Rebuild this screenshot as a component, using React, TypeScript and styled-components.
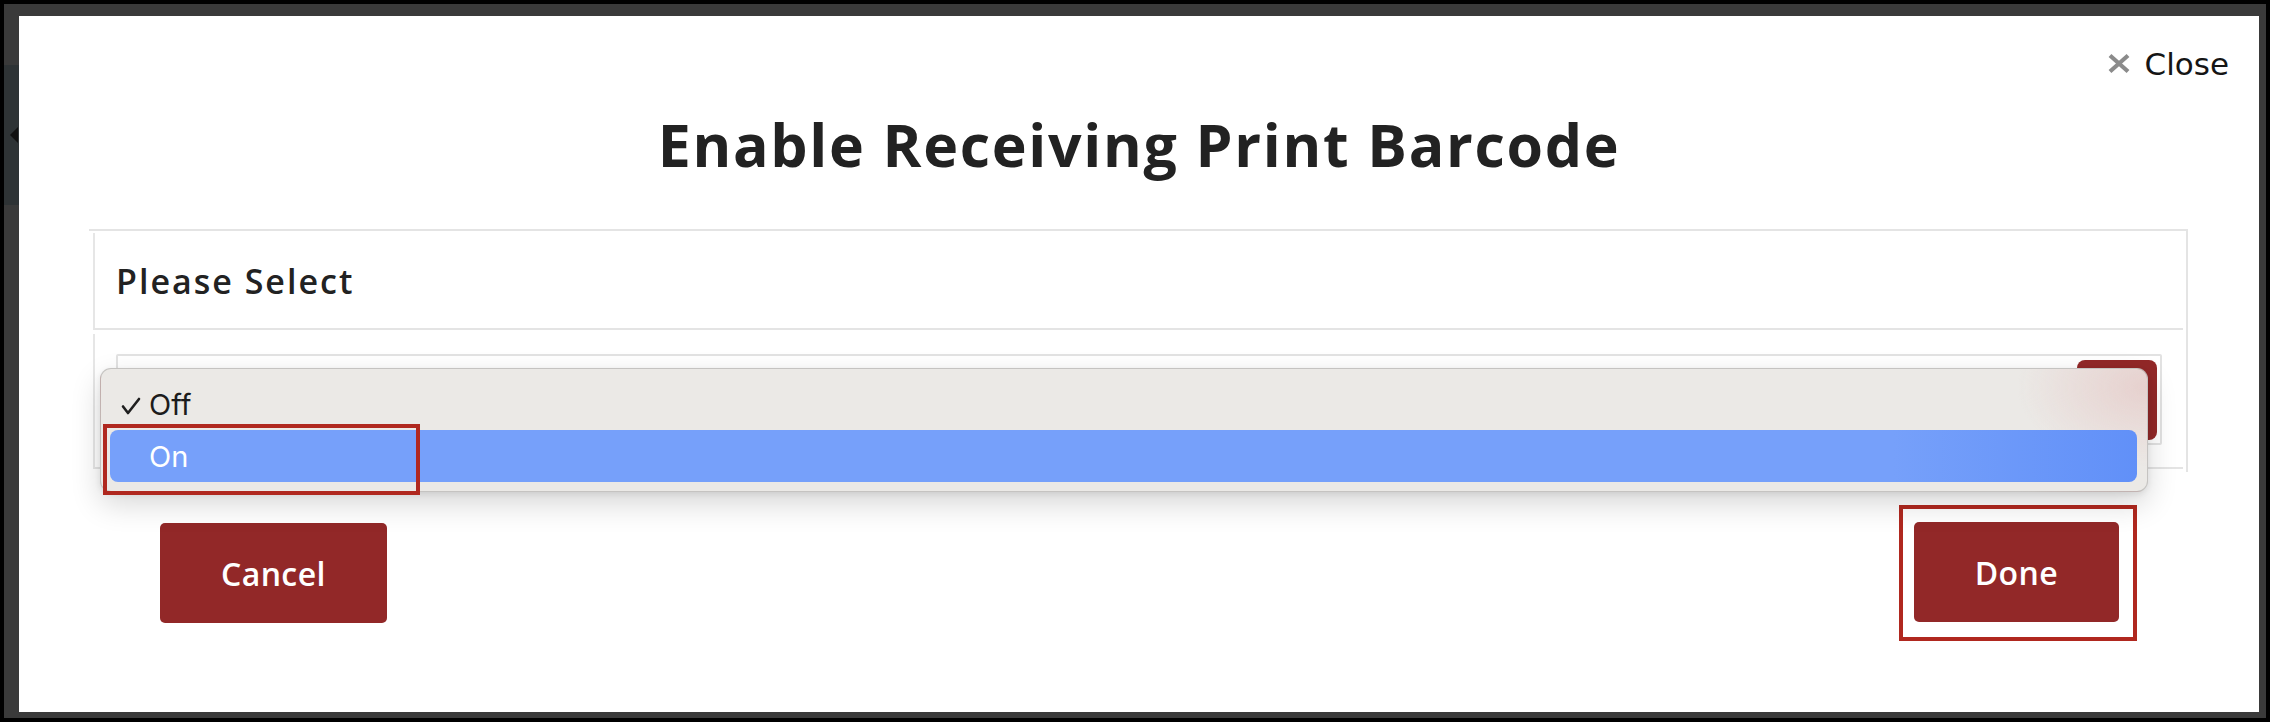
import styled, { createGlobalStyle } from 'styled-components';

const GlobalStyle = createGlobalStyle`
  * {
    box-sizing: border-box;
  }
  html,
  body {
    margin: 0;
    padding: 0;
    background: #000;
    font-family: 'Open Sans', 'Liberation Sans', sans-serif;
  }
`;

const App = () => {
  return (
    <>
      <GlobalStyle />
      <Frame>
        <Gutter>
          <Shade>
            <Chevron />
          </Shade>
        </Gutter>
        <Modal>
          <CloseRow>
            <CloseIcon viewBox='0 0 24 20'>
              <path d='M3 2 L21 18 M21 2 L3 18' />
            </CloseIcon>
            <span>Close</span>
          </CloseRow>
          <Title>Enable Receiving Print Barcode</Title>
          <Panel>
            <PanelHead>Please Select</PanelHead>
            <PanelBody>
              <SelectField>
                <SelectButton />
                <Menu>
                  <MenuItem>
                    <CheckSlot>
                      <svg width='20' height='18' viewBox='0 0 20 18'>
                        <polyline
                          points='2,9.5 7,16 18,2'
                          fill='none'
                          stroke='#1f1f1f'
                          strokeWidth='2.6'
                          strokeLinecap='round'
                          strokeLinejoin='round'
                        />
                      </svg>
                    </CheckSlot>
                    Off
                  </MenuItem>
                  <MenuItem $active>
                    <CheckSlot />
                    On
                  </MenuItem>
                  <Marker />
                </Menu>
              </SelectField>
            </PanelBody>
          </Panel>
          <Footer>
            <ActionBtn>Cancel</ActionBtn>
            <Highlight>
              <ActionBtn>Done</ActionBtn>
            </Highlight>
          </Footer>
        </Modal>
      </Frame>
    </>
  );
};

const Frame = styled.div`
  margin: 4px;
  height: 714px;
  background: #3a3a3a;
  display: flex;
  padding: 12px 7px 6px 0;
`;

const Gutter = styled.div`
  width: 15px;
  flex-shrink: 0;
  padding-top: 49px;
`;

const Shade = styled.div`
  height: 140px;
  background: #2e3335;
  display: flex;
  align-items: center;
  padding-left: 6px;
`;

const Chevron = styled.div`
  width: 0;
  height: 0;
  border-top: 8px solid transparent;
  border-bottom: 8px solid transparent;
  border-right: 8px solid #111;
`;

const Modal = styled.div`
  flex: 1;
  background: #fff;
  display: flex;
  flex-direction: column;
`;

const CloseRow = styled.div`
  display: flex;
  justify-content: flex-end;
  align-items: center;
  gap: 14px;
  padding: 30px 30px 0 0;
  height: 66px;
  font-family: 'DejaVu Sans', 'Open Sans', sans-serif;
  font-size: 31px;
  line-height: 36px;
  color: #151515;
`;

const CloseIcon = styled.svg`
  width: 24px;
  height: 21px;
  margin-top: -2px;
  & > path {
    fill: none;
    stroke: #8b8b8b;
    stroke-width: 4.2;
  }
`;

const Title = styled.h1`
  margin: 27px 0 0;
  height: 70px;
  text-align: center;
  font-size: 59px;
  line-height: 70px;
  font-weight: 700;
  color: #222;
  letter-spacing: 1.7px;
`;

const Panel = styled.div`
  margin: 50px 71px 0 70px;
  border-top: 2px solid #e4e4e4;
  border-right: 2px solid #e4e4e4;
  padding: 2px 3px 3px 4px;
  display: flex;
  flex-direction: column;
  gap: 4px;
`;

const PanelHead = styled.div`
  height: 97px;
  border-left: 2px solid #e6e6e6;
  border-bottom: 2px solid #e4e4e4;
  padding-left: 21px;
  display: flex;
  align-items: center;
  font-size: 34px;
  font-weight: 600;
  letter-spacing: 2px;
  color: #222;
`;

const PanelBody = styled.div`
  border-left: 2px solid #e6e6e6;
  border-bottom: 2px solid #e4e4e4;
  padding: 20px 21px 0 21px;
  height: 135px;
`;

const SelectField = styled.div`
  position: relative;
  height: 91px;
  border: 2px solid #e2e2e2;
  border-radius: 2px;
  display: flex;
  justify-content: flex-end;
  align-items: center;
  padding-right: 3px;
`;

const SelectButton = styled.div`
  width: 80px;
  height: 80px;
  border-radius: 8px;
  background: #922828;
`;

const Menu = styled.div`
  position: absolute;
  top: 12px;
  left: -18px;
  right: 12px;
  height: 124px;
  border: 1px solid rgba(0, 0, 0, 0.16);
  border-radius: 11px;
  padding: 9px 10px 9px 9px;
  background:
    radial-gradient(ellipse 130px 80px at 100% 15%, rgba(225, 178, 176, 0.45), rgba(235, 233, 230, 0) 100%),
    #ebe9e6;
  box-shadow: 0 12px 30px rgba(0, 0, 0, 0.16), 0 2px 6px rgba(0, 0, 0, 0.08);
  font-family: Inter, 'Open Sans', sans-serif;
`;

const MenuItem = styled.div<{ $active?: boolean }>`
  height: 52px;
  display: flex;
  align-items: center;
  border-radius: 8px;
  font-size: 29px;
  color: ${(p) => (p.$active ? '#fff' : '#1c1c1c')};
  background: ${(p) =>
    p.$active ? 'linear-gradient(to right, #76a0fa 0%, #76a0fa 88%, #6190f8 100%)' : 'transparent'};
`;

const CheckSlot = styled.span`
  width: 39px;
  flex-shrink: 0;
  display: flex;
  align-items: center;
  padding-left: 11px;
  padding-top: 4px;
`;

const Marker = styled.div`
  position: absolute;
  left: 2px;
  top: 55px;
  width: 317px;
  height: 71px;
  border: 4px solid #b0281f;
`;

const Footer = styled.div`
  margin-top: 33px;
  display: flex;
  justify-content: space-between;
  align-items: center;
  padding: 0 122px 0 141px;
`;

const Highlight = styled.div`
  border: 4px solid #b0281f;
  padding: 13px 14px 15px 11px;
`;

const ActionBtn = styled.button`
  height: 100px;
  padding: 0 61px;
  border: none;
  border-radius: 5px;
  background: #922828;
  color: #fff;
  font-family: 'Open Sans', sans-serif;
  font-size: 32px;
  font-weight: 600;
  letter-spacing: 0.4px;
  cursor: pointer;
`;

export default App;
